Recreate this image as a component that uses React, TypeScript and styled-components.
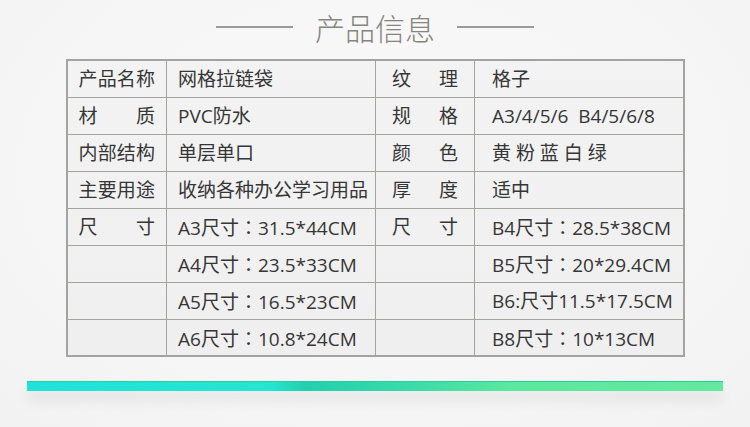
import React from "react";
import styled, { createGlobalStyle } from "styled-components";

const GlobalStyle = createGlobalStyle`
  html, body {
    margin: 0;
    padding: 0;
    background: #f6f6f6;
  }
  body {
    font-family: "Open Sans", "Noto Sans CJK SC", sans-serif;
  }
`;

type Row = {
  label: string;
  value: string;
  label2: string;
  value2: string;
};

const rows: Row[] = [
  { label: "产品名称", value: "网格拉链袋", label2: "纹理", value2: "格子" },
  { label: "材质", value: "PVC防水", label2: "规格", value2: "A3/4/5/6\u00a0\u00a0B4/5/6/8" },
  { label: "内部结构", value: "单层单口", label2: "颜色", value2: "黄 粉 蓝 白 绿" },
  { label: "主要用途", value: "收纳各种办公学习用品", label2: "厚度", value2: "适中" },
  { label: "尺寸", value: "A3尺寸：31.5*44CM", label2: "尺寸", value2: "B4尺寸：28.5*38CM" },
  { label: "", value: "A4尺寸：23.5*33CM", label2: "", value2: "B5尺寸：20*29.4CM" },
  { label: "", value: "A5尺寸：16.5*23CM", label2: "", value2: "B6:尺寸11.5*17.5CM" },
  { label: "", value: "A6尺寸：10.8*24CM", label2: "", value2: "B8尺寸：10*13CM" },
];

const Page = styled.div`
  width: 750px;
  height: 427px;
  overflow: hidden;
  background: radial-gradient(ellipse at 50% 40%, #fafafa 0%, #f5f5f5 70%, #f2f2f2 100%);
  display: flex;
  flex-direction: column;
  align-items: center;
`;

const TitleBar = styled.div`
  height: 59px;
  display: flex;
  align-items: center;
  gap: 22px;
  padding-bottom: 6px;
  box-sizing: border-box;
`;

const TitleLine = styled.span`
  width: 77px;
  height: 2px;
  background: #9a9a96;
`;

const Title = styled.h1`
  margin: 0;
  font-family: "Noto Sans CJK SC", sans-serif;
  font-size: 30px;
  font-weight: 300;
  color: #85857f;
  line-height: 1;
`;

const Table = styled.table`
  width: 619px;
  border-collapse: collapse;
  border: 2px solid #a3a3a0;
  table-layout: fixed;
  background: linear-gradient(180deg, #f3f3f3, #efefef);
`;

const Col = styled.col<{ $w: number }>`
  width: ${(p) => p.$w}px;
`;

const Cell = styled.td<{ $label?: boolean; $pad: number }>`
  height: 37px;
  box-sizing: border-box;
  border: 1px solid #a3a3a0;
  padding: 2px ${(p) => p.$pad}px 0;
  font-size: 19px;
  color: #363636;
  white-space: nowrap;
  overflow: hidden;
  text-align: ${(p) => (p.$label ? "justify" : "left")};
  text-align-last: ${(p) => (p.$label ? "justify" : "left")};
  vertical-align: middle;
  line-height: 1;
`;

const Colon = styled.span`
  font-family: "Noto Sans CJK TC", sans-serif;
`;

const Glow = styled.div`
  margin-top: 24px;
  width: 696px;
  height: 10px;
  box-sizing: border-box;
  border-top: 1px solid #1ed49c;
  background: linear-gradient(90deg, #1fe3d9 0%, #26e5d0 35%, #22cfae 40%, #3adba8 55%, #5ce89e 70%, #64e8a0 100%);
  box-shadow: 0 10px 14px rgba(0, 0, 0, 0.08);
`;

function Text({ value }: { value: string }) {
  const parts = value.split("：");
  if (parts.length === 1) return <>{value}</>;
  return (
    <>
      {parts[0]}
      <Colon>：</Colon>
      {parts[1]}
    </>
  );
}

export default function App() {
  return (
    <Page>
      <GlobalStyle />
      <TitleBar>
        <TitleLine />
        <Title>产品信息</Title>
        <TitleLine />
      </TitleBar>
      <Table>
        <colgroup>
          <Col $w={100} />
          <Col $w={209} />
          <Col $w={99} />
          <Col $w={209} />
        </colgroup>
        <tbody>
          {rows.map((r, i) => (
            <tr key={i}>
              <Cell $label $pad={11}>{r.label}</Cell>
              <Cell $pad={11}><Text value={r.value} /></Cell>
              <Cell $label $pad={16}>{r.label2}</Cell>
              <Cell $pad={17}><Text value={r.value2} /></Cell>
            </tr>
          ))}
        </tbody>
      </Table>
      <Glow />
    </Page>
  );
}
